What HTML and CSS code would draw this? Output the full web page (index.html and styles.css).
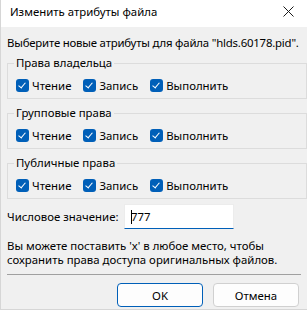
FILE: index.html
```html
<!DOCTYPE html>
<html lang="ru">
  <head>
    <meta charset="utf-8" />
    <title>Изменить атрибуты файла</title>
    <link rel="stylesheet" href="styles.css">
  </head>
  <body>
    <div class="window">
      <div class="titlebar">
        <span class="title">Изменить атрибуты файла</span>
        <svg class="close" width="11" height="11" viewBox="0 0 11 11">
          <path d="M0.5 0.5 L10.5 10.5 M10.5 0.5 L0.5 10.5" stroke="#1a1a1a" stroke-width="1" fill="none" />
        </svg>
      </div>

      <div class="content">
        <p class="intro">Выберите новые атрибуты для файла "hlds.60178.pid".</p>

        <fieldset class="group">
          <legend>Права владельца</legend>
          <div class="row">
            <label class="check"><span class="box"></span>Чтение</label>
            <label class="check"><span class="box"></span>Запись</label>
            <label class="check"><span class="box"></span>Выполнить</label>
          </div>
        </fieldset>

        <fieldset class="group">
          <legend>Групповые права</legend>
          <div class="row">
            <label class="check"><span class="box"></span>Чтение</label>
            <label class="check"><span class="box"></span>Запись</label>
            <label class="check"><span class="box"></span>Выполнить</label>
          </div>
        </fieldset>

        <fieldset class="group">
          <legend>Публичные права</legend>
          <div class="row">
            <label class="check"><span class="box"></span>Чтение</label>
            <label class="check"><span class="box"></span>Запись</label>
            <label class="check"><span class="box"></span>Выполнить</label>
          </div>
        </fieldset>

        <div class="numeric">
          <span class="numeric-label">Числовое значение:</span>
          <div class="input"><span class="caret"></span>777</div>
        </div>

        <p class="note">Вы можете поставить 'x' в любое место, чтобы<br>сохранить права доступа оригинальных файлов.</p>

        <div class="separator"></div>

        <div class="buttons">
          <div class="btn btn-default">OK</div>
          <div class="btn">Отмена</div>
        </div>
      </div>
    </div>
  </body>
</html>
```

FILE: styles.css
```css
body {
  margin: 0;
  font-family: "Noto Sans", sans-serif;
  font-size: 11.4px;
  color: #000;
}

.window {
  width: 306px;
  height: 309px;
  background-color: #f0f0f0;
  border-left: 1px solid #d6d6d6;
  border-bottom: 1px solid #d6d6d6;
  overflow: hidden;
}

.titlebar {
  height: 27px;
  background-color: #fff;
  display: flex;
  align-items: center;
  justify-content: space-between;
  padding: 0 13px 0 9px;
}

.title {
  line-height: 16px;
  margin-top: -3px;
}

.close {
  margin-top: -5px;
}

.content {
  padding: 0 0 0 6px;
}

.intro {
  margin: 8px 0 0 0;
  line-height: 16px;
  white-space: nowrap;
  letter-spacing: -0.2px;
}

.group {
  margin: 5px 0 0 0;
  padding: 0 0 6px 6px;
  border: 1px solid #dcdcdc;
  min-width: 0;
}

.group + .group {
  margin-top: 7px;
}

.group legend {
  padding: 0 2px;
  margin-left: 0;
  line-height: 14px;
}

.row {
  display: flex;
  margin-top: 9px;
  height: 13px;
  align-items: center;
  white-space: nowrap;
}

.check {
  display: flex;
  align-items: center;
  margin-right: 12px;
}

.check:first-child {
  margin-left: 2px;
}

.box {
  width: 13px;
  height: 13px;
  border-radius: 3px;
  background-color: #005fb8;
  margin-right: 3px;
  position: relative;
}

.box::after {
  content: "";
  position: absolute;
  left: 4px;
  top: 2px;
  width: 3px;
  height: 6px;
  border-right: 1px solid #fff;
  border-bottom: 1px solid #fff;
  transform: rotate(40deg);
}

.numeric {
  display: flex;
  align-items: center;
  margin-top: 5px;
}

.numeric-label {
  width: 117px;
  white-space: nowrap;
}

.input {
  width: 110px;
  height: 25px;
  box-sizing: border-box;
  background-color: #fff;
  border: 1px solid #ececec;
  border-bottom: 1px solid #005fb8;
  display: flex;
  align-items: center;
  padding-left: 6px;
}

.caret {
  width: 1px;
  height: 14px;
  background-color: #000;
  margin-right: -1px;
}

.note {
  margin: 10px 0 0 0;
  line-height: 14px;
  white-space: nowrap;
}

.separator {
  height: 1px;
  background-color: #a0a0a0;
  margin: 7px 6px 0 0;
}

.buttons {
  display: flex;
  justify-content: flex-end;
  gap: 10px;
  margin-top: 8px;
  padding-right: 8px;
}

.btn {
  width: 84px;
  height: 22px;
  border: 1px solid #d0d0d0;
  border-radius: 4px;
  background-color: #fdfdfd;
  display: flex;
  align-items: center;
  justify-content: center;
}

.btn-default {
  border-color: #005fb8;
}
```
